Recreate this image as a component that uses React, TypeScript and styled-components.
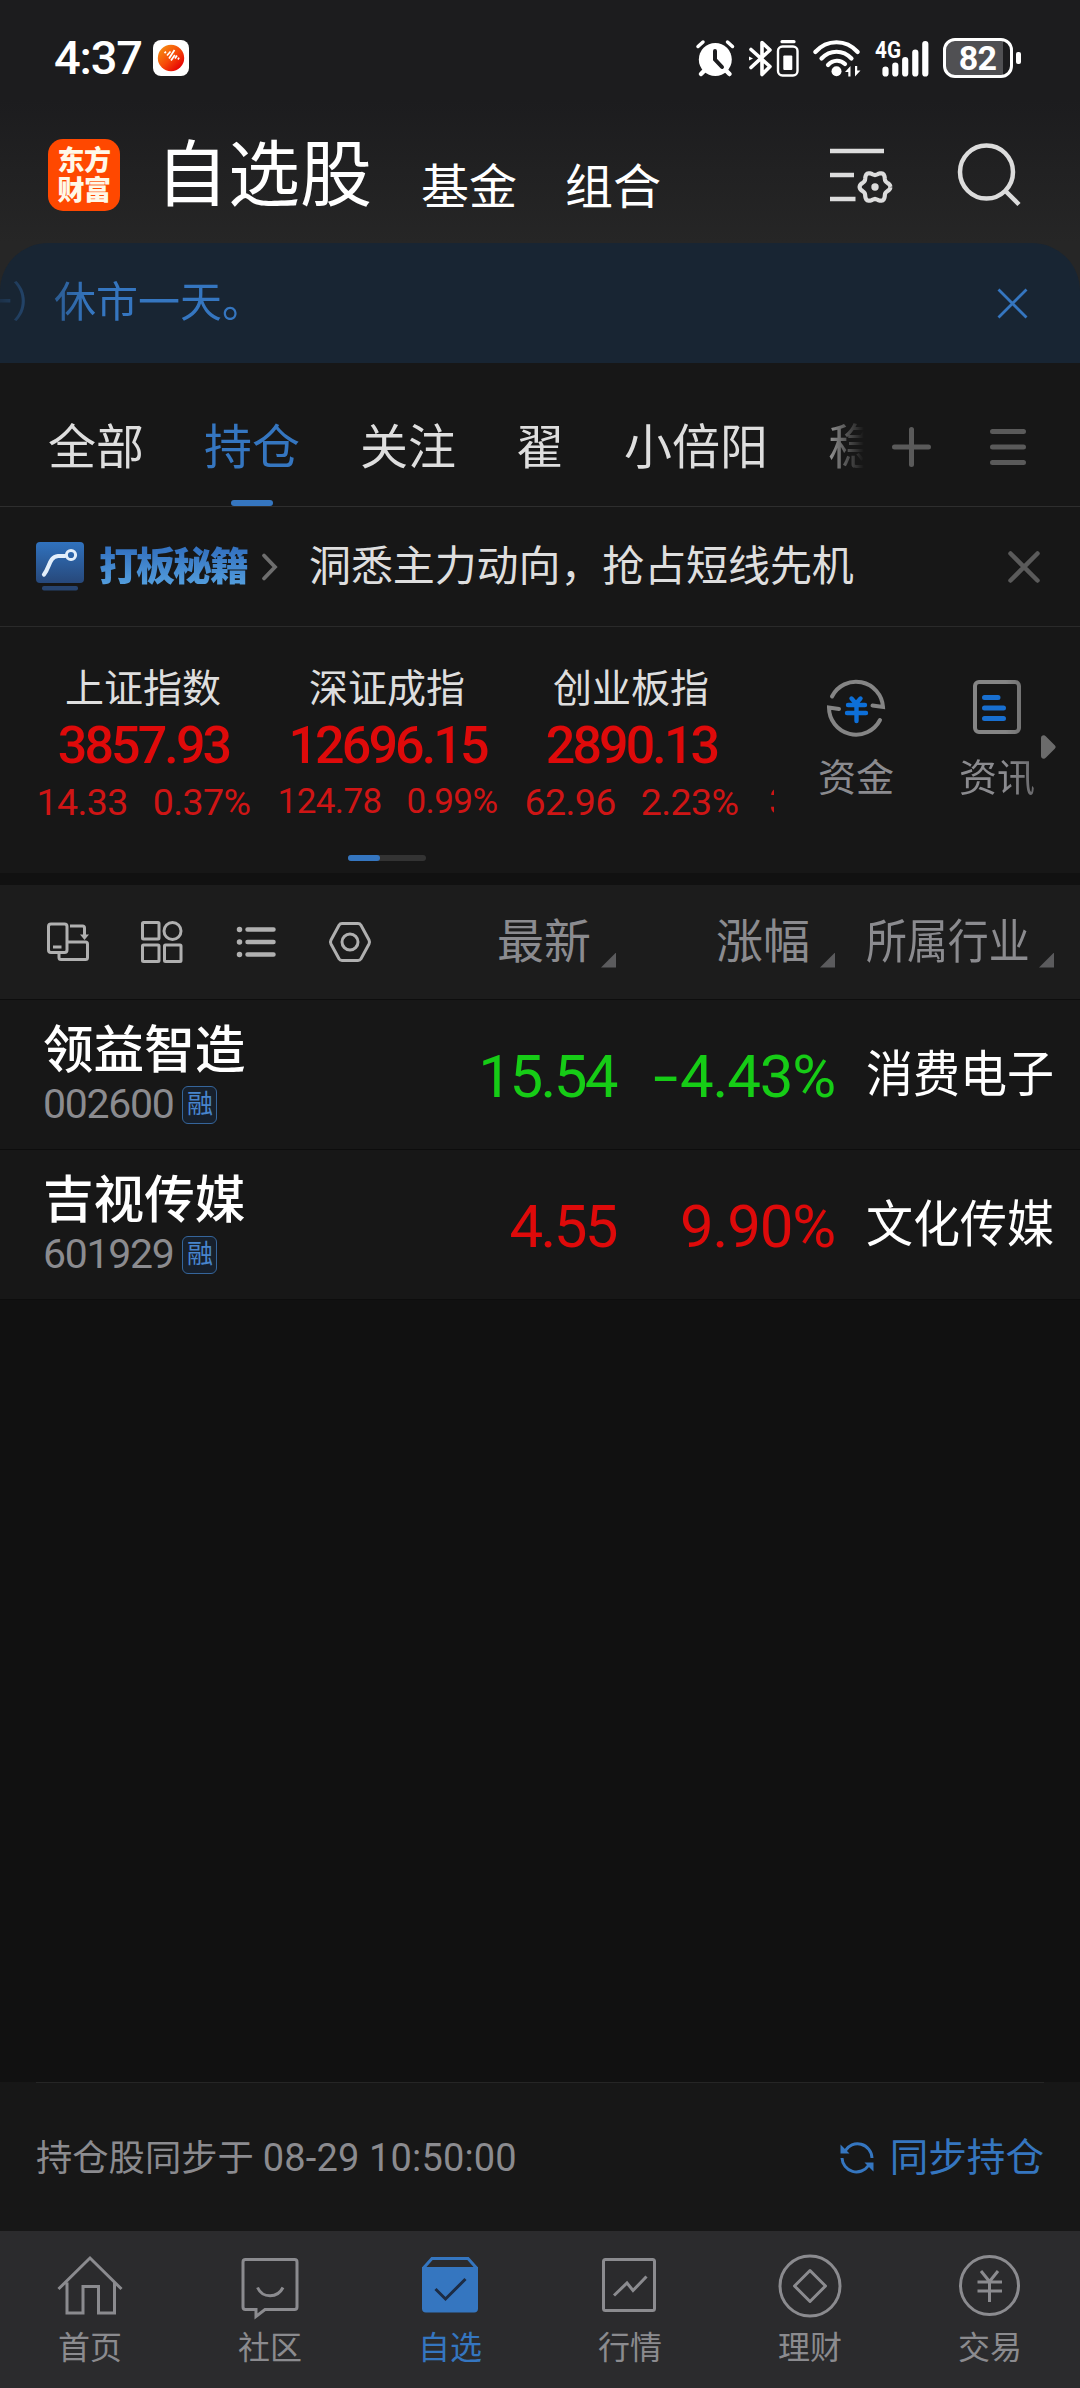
import React from 'react';
import styled, { createGlobalStyle } from 'styled-components';

const BLUE = '#3576c0';
const RED = '#de0a0a';
const GREEN = '#16cc16';
const GREY = '#8b8b8f';

const GlobalStyle = createGlobalStyle`
  * { box-sizing: border-box; }
  body {
    margin: 0;
    background: #111111;
    font-family: Roboto, "Noto Sans CJK SC", sans-serif;
    color: #dedede;
  }
  svg { display: block; flex: none; overflow: visible; }
`;

const Screen = styled.div`
  width: 1080px;
  height: 2388px;
  display: flex;
  flex-direction: column;
  overflow: hidden;
  background: #111111;
  white-space: nowrap;
`;

/* ---------- status bar and header ---------- */

const Top = styled.div`
  height: 363px;
  flex: none;
  display: flex;
  flex-direction: column;
  background: linear-gradient(#1c1c1e 100px, #262626 243px);
`;

const StatusBar = styled.div`
  height: 116px;
  padding: 0 59px 0 54px;
  display: flex;
  align-items: center;
  color: #fff;
`;

const Clock = styled.span`
  font-size: 47px;
  font-weight: 500;
  line-height: 56px;
  letter-spacing: -1.2px;
  width: 99px;
`;

const StatusIcons = styled.div`
  margin-left: auto;
  display: flex;
  align-items: center;
`;

const Gap = styled.span<{ $w: number }>`
  flex: none;
  width: ${(p) => p.$w}px;
`;

const Battery = styled.div`
  width: 70px;
  height: 40px;
  border: 3px solid #fff;
  border-radius: 12px;
  background: linear-gradient(90deg, #505053 57px, #1c1c1e 57px);
  font-size: 34px;
  font-weight: 700;
  line-height: 35px;
  text-align: center;
  letter-spacing: -0.8px;
  padding-right: 1px;
`;

const BatteryTip = styled.span`
  width: 5px;
  height: 12px;
  margin-left: 3px;
  border-radius: 2px;
  background: #fff;
`;

const Header = styled.div`
  height: 127px;
  padding: 0 59px 0 48px;
  display: flex;
  align-items: flex-start;
`;

const Logo = styled.div`
  width: 72px;
  height: 72px;
  margin: 23px 36px 0 0;
  padding-top: 7px;
  border-radius: 15px;
  background: #ff4800;
  color: #fff8e8;
  font-size: 27px;
  font-weight: 900;
  line-height: 30px;
  letter-spacing: -0.5px;
  text-align: center;
`;

const Title = styled.span`
  margin: 24px 49px 0 0;
  font-size: 72px;
  line-height: 72px;
  font-weight: 400;
  color: #fff;
  width: 216px;
`;

const HeaderLink = styled.span`
  margin: 48px 48px 0 0;
  font-size: 48px;
  line-height: 48px;
  color: #fff;
`;

const HeaderIcons = styled.div`
  margin: 27px 0 0 auto;
  display: flex;
  gap: 65px;
`;

const Notice = styled.div`
  height: 120px;
  padding-right: 52px;
  display: flex;
  align-items: center;
  justify-content: space-between;
  background: #182533;
  border-radius: 48px 48px 0 0;
  color: ${BLUE};
`;

const NoticeText = styled.div`
  width: 900px;
  overflow: hidden;
  font-size: 42px;
  line-height: 60px;
  text-indent: -30px;
  mask-image: linear-gradient(90deg, rgba(0, 0, 0, 0.15), #000 90px);
`;

/* ---------- group tabs ---------- */

const Tabs = styled.div`
  height: 144px;
  flex: none;
  padding: 0 54px 0 48px;
  display: flex;
  background: #171717;
  border-bottom: 1px solid #2e2e2e;
`;

const TabList = styled.div`
  width: 816px;
  flex: none;
  display: flex;
  gap: 60px;
  overflow: hidden;
  mask-image: linear-gradient(90deg, #000 760px, transparent 816px);
`;

const Tab = styled.div<{ $active?: boolean }>`
  flex: none;
  height: 143px;
  display: flex;
  flex-direction: column;
  align-items: center;
  font-size: 48px;
  line-height: 64px;
  padding-top: 53px;
  color: ${(p) => (p.$active ? BLUE : '#dedede')};

  &::after {
    content: '';
    width: 42px;
    height: 6px;
    margin-top: auto;
    border-radius: 3px;
    background: ${(p) => (p.$active ? BLUE : 'transparent')};
  }
`;

const TabActions = styled.div`
  flex: 1;
  display: flex;
  justify-content: space-between;
  padding: 64px 0 0 28px;
  color: #5a5a5a;
`;

/* ---------- promotion row ---------- */

const Promo = styled.div`
  height: 120px;
  flex: none;
  padding: 0 41px 0 36px;
  display: flex;
  align-items: center;
  background: #171717;
  border-bottom: 1px solid #2a2a2a;
`;

const PromoName = styled.span`
  width: 151px;
  margin: 0 12px 0 14px;
  font-size: 39px;
  font-weight: 900;
  line-height: 56px;
  letter-spacing: -2px;
  background: linear-gradient(#3574c2 12px, #55a0de 48px);
  background-clip: text;
  -webkit-background-clip: text;
  color: transparent;
`;

const PromoText = styled.span`
  margin-left: 31px;
  font-size: 42px;
  line-height: 60px;
  letter-spacing: -0.1px;
`;

const Pusher = styled.span`
  flex: 1;
`;

const PromoClose = styled.span`
  color: #5a5a5a;
`;

/* ---------- indices ---------- */

const Market = styled.div`
  height: 246px;
  flex: none;
  display: flex;
  background: #171717;
`;

const IndexPane = styled.div`
  width: 774px;
  flex: none;
  padding-left: 21px;
  overflow: hidden;
`;

const IndexList = styled.div`
  display: flex;
  height: 228px;
`;

const IndexCard = styled.div`
  flex: none;
  width: 244px;
  padding-top: 39px;
  display: flex;
  flex-direction: column;
  align-items: center;
`;

const IndexName = styled.div`
  height: 45px;
  font-size: 39px;
  line-height: 46px;
`;

const IndexValue = styled.div`
  height: 68px;
  font-size: 52px;
  font-weight: 500;
  line-height: 69px;
  letter-spacing: -2.9px;
  padding-left: 1px;
  color: ${RED};
`;

const IndexChange = styled.div<{ $size: number }>`
  display: flex;
  gap: 25px;
  font-size: ${(p) => p.$size}px;
  line-height: 46px;
  letter-spacing: -0.6px;
  padding-left: 1px;
  color: #cf1515;
`;

const NextChange = styled.div`
  padding: 153px 0 0 16px;
  font-size: 37px;
  line-height: 44px;
  color: #cf1515;
`;

const Progress = styled.div`
  width: 78px;
  height: 6px;
  margin-left: 327px;
  border-radius: 3px;
  background: #333;

  &::before {
    content: '';
    display: block;
    width: 32px;
    height: 6px;
    border-radius: 3px;
    background: ${BLUE};
  }
`;

const Shortcuts = styled.div`
  flex: 1;
  padding: 50px 0 0 37px;
  display: flex;
  align-items: flex-start;
`;

const Shortcut = styled.div<{ $fade?: boolean }>`
  flex: none;
  width: 90px;
  margin-right: 51px;
  display: flex;
  flex-direction: column;
  align-items: center;
  gap: 16px;
  font-size: 38px;
  line-height: 50px;
  color: ${GREY};
  ${(p) => p.$fade && 'margin-right: -1px; mask-image: linear-gradient(90deg, #000 60%, rgba(0,0,0,.7) 92%);'}
`;

const ShortcutArrow = styled.div`
  padding-top: 58px;
`;

/* ---------- stock table ---------- */

const TableRow = styled.div<{ $head?: boolean }>`
  height: ${(p) => (p.$head ? 115 : 150)}px;
  flex: none;
  padding: 0 26px 0 43px;
  display: grid;
  grid-template-columns: 1fr 219px 219px 219px;
  align-items: center;
  background: ${(p) => (p.$head ? '#1c1c1c' : '#171717')};
  border-bottom: 1px solid #0d0d0d;
`;

const Divider = styled.div`
  height: 12px;
  flex: none;
  background: #111111;
`;

const Tools = styled.div`
  display: flex;
  align-items: center;
  padding-left: 4px;
  gap: 52px;
`;

const HeadCell = styled.div<{ $narrow?: boolean }>`
  display: flex;
  align-items: center;
  justify-content: flex-end;
  font-size: 47px;
  line-height: 60px;
  color: ${GREY};

  span {
    width: ${(p) => (p.$narrow ? 164 : 95)}px;
    transform: ${(p) => (p.$narrow ? 'scaleX(.87)' : 'none')};
    transform-origin: 0 50%;
  }

  &::after {
    content: '';
    width: 15px;
    height: 15px;
    margin: 36px 0 0 9px;
    background: #5b5b5d;
    clip-path: polygon(100% 0, 100% 100%, 0 100%);
  }
`;

const Name = styled.div`
  padding-top: 3px;
  font-size: 50.6px;
  line-height: 56px;
  font-weight: 500;
  color: #fff;
`;

const CodeLine = styled.div`
  display: flex;
  align-items: center;
  height: 50px;
  font-size: 41px;
  line-height: 50px;
  letter-spacing: -1.3px;
  color: ${GREY};
`;

const Badge = styled.span`
  width: 35px;
  height: 38px;
  margin: 1px 0 0 9px;
  border: 1.5px solid #35659b;
  border-radius: 6px;
  background: #17202c;
  color: #4885cc;
  font-size: 26px;
  line-height: 35px;
  letter-spacing: 0;
  text-align: center;
`;

const Figure = styled.div<{ $up: boolean; $spacing: number }>`
  text-align: right;
  font-size: 60px;
  line-height: 70px;
  padding-top: 4px;
  letter-spacing: ${(p) => p.$spacing}px;
  color: ${(p) => (p.$up ? RED : GREEN)};
`;

const Minus = styled.span`
  display: inline-block;
  margin-right: 4px;
  transform: scaleX(1.5);
  transform-origin: 100% 50%;
`;

const Industry = styled.div`
  padding-left: 31px;
  font-size: 50px;
  line-height: 60px;
  color: #fff;

  span {
    display: block;
    width: 200px;
    transform: scaleX(0.94);
    transform-origin: 0 50%;
  }
`;

/* ---------- sync line and navigation ---------- */

const Blank = styled.div`
  flex: 1;
`;

const SyncBar = styled.div`
  height: 149px;
  flex: none;
  padding: 0 36px;
  background: #171717;
`;

const SyncInner = styled.div`
  height: 149px;
  padding-top: 2px;
  border-top: 1px solid #262626;
  display: flex;
  align-items: center;
  justify-content: space-between;
`;

const SyncInfo = styled.span`
  font-size: 36.3px;
  line-height: 50px;
  color: ${GREY};
`;

const SyncTime = styled.span`
  font-size: 38px;
  letter-spacing: 0.15px;
`;

const SyncButton = styled.div`
  display: flex;
  align-items: center;
  gap: 16px;
  font-size: 38.6px;
  line-height: 50px;
  color: ${BLUE};
`;

const Nav = styled.div`
  height: 157px;
  flex: none;
  display: grid;
  grid-template-columns: repeat(6, 180px);
  background: #2b2b2d;
`;

const NavItem = styled.div<{ $active?: boolean }>`
  padding-top: 22px;
  display: flex;
  flex-direction: column;
  align-items: center;
  gap: 9px;
  font-size: 32px;
  line-height: 44px;
  color: ${(p) => (p.$active ? BLUE : GREY)};
`;

/* ---------- drawings ---------- */

const wave = Array.from({ length: 73 }, (_, i) => {
  const a = (i * 5 * Math.PI) / 180;
  const r = 13.7 + 1.7 * Math.cos(6 * a);
  return `${i ? 'L' : 'M'}${(45 + r * Math.cos(a)).toFixed(2)} ${(38 + r * Math.sin(a)).toFixed(2)}`;
}).join('');

const Cross = ({ size, w, round }: { size: number; w: number; round?: boolean }) => (
  <svg width={size} height={size} viewBox={`0 0 ${size} ${size}`} fill="none" stroke="currentColor" strokeWidth={w} strokeLinecap={round ? 'round' : 'butt'}>
    <path d={`M1.5 1.5 ${size - 1.5} ${size - 1.5}M${size - 1.5} 1.5 1.5 ${size - 1.5}`} />
  </svg>
);

const MiniApp = () => (
  <svg width="36" height="36" viewBox="0 0 36 36">
    <defs>
      <linearGradient id="sun" x1="0" y1="0" x2="1" y2="1">
        <stop offset="0.1" stopColor="#f58a12" />
        <stop offset="0.5" stopColor="#f64a08" />
        <stop offset="0.85" stopColor="#e60505" />
      </linearGradient>
    </defs>
    <rect width="36" height="36" rx="8" fill="#fff" />
    <circle cx="18" cy="18" r="13.2" fill="url(#sun)" />
    <path d="M11.5 13.2l1.5-1.5M14 15.5l3.5-4M16 18.5l5.5-8.5M18 20.5l3.8-5.5M22 18.5l2-3M25 19.5l1-1.8" stroke="#fff" strokeWidth="1.7" fill="none" />
  </svg>
);

const Alarm = () => (
  <svg width="39" height="37" viewBox="0 0 39 37" fill="none" stroke="#fff" strokeLinecap="round">
    <circle cx="19.3" cy="19.5" r="16.5" fill="#fff" stroke="none" />
    <path d="M2 6.5 7 2M36.5 6.5 31.5 2" strokeWidth="3.5" />
    <path d="M8 31l-3 3M30.5 31l3 3" strokeWidth="4.5" />
    <path d="M19 11v8.5l7 7.5" stroke="#1c1c1e" strokeWidth="4" />
  </svg>
);

const Bluetooth = () => (
  <svg width="51" height="37" viewBox="0 0 51 37" fill="none" stroke="#fff">
    <path d="M2 9.5 21 26.5 13 34.5V2.5L21 10 2 27.5" strokeWidth="3.6" strokeLinejoin="round" strokeLinecap="round" />
    <path d="M0 16.5l4 2-4 2z" fill="#fff" stroke="none" />
    <rect x="29" y="6.5" width="19.5" height="29" rx="4.5" strokeWidth="2.4" />
    <path d="M33 1.7h12" strokeWidth="3.2" strokeLinecap="round" />
    <rect x="34.3" y="15.5" width="9" height="14.5" rx="1" fill="#fff" stroke="none" />
  </svg>
);

const Wifi = () => (
  <svg width="47" height="37" viewBox="0 0 47 37" fill="none" stroke="#fff" strokeLinecap="round" strokeWidth="4.2">
    <path d="M2.3 12C14-1 33-1 44.7 12" />
    <path d="M8.5 18.5C17 9.5 30 9.5 38.5 18.5" />
    <path d="M15 25C20 19.5 27.5 19.5 32 24" />
    <circle cx="23.5" cy="31.2" r="5" fill="#fff" stroke="none" />
    <path d="M32 32l5.5-6v10.500h-2.200V32zM47.500 30.500l-5.500 6V26h2.200v4.500z" fill="#fff" stroke="none" />
  </svg>
);

const Signal = () => (
  <svg width="54" height="37" viewBox="0 0 54 37" stroke="#fff" strokeWidth="6.2" strokeLinecap="round">
    <path d="M10.5 29.5v4M20.3 25.5v8M30.2 20v13.5M40.3 12.500v21M50.3 4v29.5" />
    <text x="0" y="18" stroke="none" fill="#fff" fontSize="24" fontWeight="700" fontFamily="Roboto, sans-serif" textLength="26" lengthAdjust="spacingAndGlyphs">4G</text>
  </svg>
);

const MenuGear = () => (
  <svg width="63" height="58" viewBox="0 0 63 58" fill="none" stroke="#dcdcdc" strokeWidth="4.5">
    <path d="M0 8h54M0 32h24M0 56h25.5" />
    <path d={wave} strokeWidth="4.2" transform="translate(0 6)" />
    <circle cx="45" cy="44" r="3.7" fill="#dcdcdc" stroke="none" />
  </svg>
);

const Search = () => (
  <svg width="63" height="63" viewBox="0 0 63 63" fill="none" stroke="#dcdcdc" strokeWidth="4.5">
    <circle cx="28.5" cy="29" r="26.5" />
    <path d="M47.500 48 61 61.500" />
  </svg>
);

const Plus = () => (
  <svg width="39" height="40" viewBox="0 0 39 40" stroke="currentColor" strokeWidth="5" strokeLinecap="round">
    <path d="M19.500 2.500v35M2.500 20h34" />
  </svg>
);

const Bars = () => (
  <svg width="36" height="40" viewBox="0 0 36 40" stroke="currentColor" strokeWidth="5" strokeLinecap="round">
    <path d="M2.500 4.500h31M2.500 20h31M2.500 35.500h31" />
  </svg>
);

const PromoIcon = () => (
  <svg width="49" height="50" viewBox="0 0 49 50" fill="none">
    <defs>
      <linearGradient id="tile" x1="0" y1="0" x2="0" y2="1">
        <stop offset="0" stopColor="#3072be" />
        <stop offset="1" stopColor="#27487a" />
      </linearGradient>
    </defs>
    <rect width="48" height="41" rx="4" fill="url(#tile)" />
    <rect x="6" y="44" width="36" height="4.5" rx="2" fill="#27446f" />
    <path d="M8 32.500C14 25 13 15 22 14H29" stroke="#e3effb" strokeWidth="4.2" strokeLinecap="round" />
    <circle cx="35" cy="13" r="4.6" stroke="#e3effb" strokeWidth="3" />
  </svg>
);

const Chevron = () => (
  <svg width="16" height="28" viewBox="0 0 16 28" fill="none" stroke="#6e6e6e" strokeWidth="3.8" strokeLinecap="round">
    <path d="M2 2.500 13 14 2 25.500" />
  </svg>
);

const FundIcon = () => (
  <svg width="60" height="60" viewBox="0 0 60 60" fill="none" stroke="#858585" strokeWidth="4">
    <path d="M6 19.500A27 27 0 0 1 57 30L46.500 28.500" strokeLinecap="round" />
    <path d="M54 43A27 27 0 0 1 3 30.500L13 32" strokeLinecap="round" />
    <path d="M25.500 21.500 30 26.500 34.500 21.500M22 28h17M21 36h19M30.500 26v18" stroke="#0d6fd8" strokeWidth="4.4" strokeLinecap="round" />
  </svg>
);

const NewsIcon = () => (
  <svg width="48" height="60" viewBox="0 0 48 60" fill="none" stroke="#858585" strokeWidth="4">
    <rect x="2" y="5" width="44" height="50" rx="4" />
    <path d="M11.500 20.500h13.500M11.500 31h19M11.500 41.500h19" stroke="#186fd0" strokeWidth="5" strokeLinecap="round" />
  </svg>
);

const ToolIcon = ({ children }: { children: React.ReactNode }) => (
  <svg width="42" height="42" viewBox="0 0 42 42" fill="none" stroke="#b0b0b0" strokeWidth="3" strokeLinejoin="round">
    {children}
  </svg>
);

const SyncIcon = () => (
  <svg width="34" height="34" viewBox="0 0 34 34" fill="none" stroke={BLUE} strokeWidth="3">
    <path d="M5 10A14.500 14.500 0 0 1 32 17M2 17A14.500 14.500 0 0 0 28.500 24.500" />
    <path d="M.5 3.500V12.500H9.500zM33.500 30.500V21.500H24.500z" fill={BLUE} stroke="none" />
  </svg>
);

const NavSvg = ({ children }: { children: React.ReactNode }) => (
  <svg width="66" height="64" viewBox="0 0 66 64" fill="none" stroke="currentColor" strokeWidth="3">
    {children}
  </svg>
);

const navItems = [
  {
    label: '首页',
    icon: <path d="M1.500 36 33 5 64.500 36M10 29.500V60H26V33.500H41.500V60H57.500V29.500" />,
  },
  {
    label: '社区',
    icon: (
      <>
        <path d="M8.500 6.500h49a2.500 2.500 0 0 1 2.500 2.500v45a2.500 2.500 0 0 1-2.500 2.500H28L19 63.500V56.500H8.500A2.500 2.500 0 0 1 6 54V9a2.500 2.500 0 0 1 2.500-2.500" />
        <path d="M20.500 34.500c5 11 20 11 25.500 0" />
      </>
    ),
  },
  {
    label: '自选',
    active: true,
    icon: (
      <>
        <path d="M5 14h56v41.500a4 4 0 0 1-4 4H9a4 4 0 0 1-4-4z" fill="currentColor" stroke="none" />
        <path d="M6.500 15 15 5.500H51L59.500 15" />
        <path d="M18.500 36 28.500 46 48.500 26" stroke="#1d2c44" />
      </>
    ),
  },
  {
    label: '行情',
    icon: (
      <>
        <rect x="6.500" y="6.500" width="51" height="51" rx="2" />
        <path d="M17 42.500 30 30 36 37.500 49.500 23.500" />
      </>
    ),
  },
  {
    label: '理财',
    icon: (
      <>
        <circle cx="33" cy="33" r="30" />
        <path d="M33 17.500 48.500 33 33 48.500 17.500 33z" strokeLinejoin="round" />
      </>
    ),
  },
  {
    label: '交易',
    icon: (
      <>
        <circle cx="32.500" cy="32.500" r="29" />
        <path d="M24 18 32.500 28.500 41 18M20.500 29h24.500M20.500 38h24.500M32.500 28v21" />
      </>
    ),
  },
];

const indices = [
  { name: '上证指数', value: '3857.93', diff: '14.33', pct: '0.37%', size: 37.5 },
  { name: '深证成指', value: '12696.15', diff: '124.78', pct: '0.99%', size: 35 },
  { name: '创业板指', value: '2890.13', diff: '62.96', pct: '2.23%', size: 37.5 },
];

const stocks = [
  { name: '领益智造', code: '002600', price: '15.54', pct: '4.43%', up: false, industry: '消费电子' },
  { name: '吉视传媒', code: '601929', price: '4.55', pct: '9.90%', up: true, industry: '文化传媒' },
];

export default function App() {
  return (
    <Screen>
      <GlobalStyle />
      <Top>
        <StatusBar>
          <Clock>4:37</Clock>
          <MiniApp />
          <StatusIcons>
            <Alarm />
            <Gap $w={14} />
            <Bluetooth />
            <Gap $w={13} />
            <Wifi />
            <Gap $w={15} />
            <Signal />
            <Gap $w={14} />
            <Battery>82</Battery>
            <BatteryTip />
          </StatusIcons>
        </StatusBar>
        <Header>
          <Logo>
            东方
            <br />
            财富
          </Logo>
          <Title>自选股</Title>
          <HeaderLink>基金</HeaderLink>
          <HeaderLink>组合</HeaderLink>
          <HeaderIcons>
            <MenuGear />
            <Search />
          </HeaderIcons>
        </Header>
        <Notice>
          <NoticeText>一）休市一天。</NoticeText>
          <Cross size={31} w={2.8} />
        </Notice>
      </Top>

      <Tabs>
        <TabList>
          <Tab>全部</Tab>
          <Tab $active>持仓</Tab>
          <Tab>关注</Tab>
          <Tab>翟</Tab>
          <Tab>小倍阳</Tab>
          <Tab>稳</Tab>
        </TabList>
        <TabActions>
          <Plus />
          <Bars />
        </TabActions>
      </Tabs>

      <Promo>
        <PromoIcon />
        <PromoName>打板秘籍</PromoName>
        <Chevron />
        <PromoText>洞悉主力动向，抢占短线先机</PromoText>
        <Pusher />
        <PromoClose>
          <Cross size={30} w={4.5} round />
        </PromoClose>
      </Promo>

      <Market>
        <IndexPane>
          <IndexList>
            {indices.map((i) => (
              <IndexCard key={i.name}>
                <IndexName>{i.name}</IndexName>
                <IndexValue>{i.value}</IndexValue>
                <IndexChange $size={i.size}>
                  <span>{i.diff}</span>
                  <span>{i.pct}</span>
                </IndexChange>
              </IndexCard>
            ))}
            <NextChange>3</NextChange>
          </IndexList>
          <Progress />
        </IndexPane>
        <Shortcuts>
          <Shortcut>
            <FundIcon />
            资金
          </Shortcut>
          <Shortcut $fade>
            <NewsIcon />
            资讯
          </Shortcut>
          <ShortcutArrow>
            <svg width="15" height="24" viewBox="0 0 15 24" fill="#6b6b6b">
              <path d="M0 3C0 .5 3-.8 5 1.500L14 10.500Q15.500 12 14 13.500L5 22.500C3 24.800 0 23.500 0 21z" />
            </svg>
          </ShortcutArrow>
        </Shortcuts>
      </Market>

      <Divider />

      <TableRow $head>
        <Tools>
          <ToolIcon>
            <rect x="1.500" y="3" width="18.500" height="28.500" rx="2.500" />
            <path d="M6 26h8.500M23 5h12.500a2 2 0 0 1 2 2v8M20 21H38.500a2 2 0 0 1 2 2V36.500a2 2 0 0 1-2 2H14a2 2 0 0 1-2-2V32" />
            <path d="M33 13.500h9L37.500 19z" fill="#b0b0b0" stroke="none" />
          </ToolIcon>
          <ToolIcon>
            <rect x="1.500" y="1.500" width="16.500" height="16.500" rx="1" />
            <circle cx="31.500" cy="10" r="8.500" />
            <rect x="1.500" y="24" width="16.500" height="16.500" rx="1" />
            <rect x="23.500" y="24" width="16.500" height="16.500" rx="1" />
          </ToolIcon>
          <ToolIcon>
            <path d="M4.500 8.500h0M4.500 21h0M4.500 33.500h0" strokeWidth="5.500" strokeLinecap="round" />
            <path d="M12.500 8.500h26M12.500 21h26M12.500 33.500h26" strokeWidth="4.500" strokeLinecap="round" />
          </ToolIcon>
          <ToolIcon>
            <path d="M13 2.500H29Q31 2.500 32 4.200L40 19Q41 21 40 23L32 37.800Q31 39.500 29 39.500H13Q11 39.500 10 37.800L2 23Q1 21 2 19L10 4.200Q11 2.500 13 2.500z" />
            <circle cx="21" cy="21" r="8" />
          </ToolIcon>
        </Tools>
        <HeadCell>
          <span>最新</span>
        </HeadCell>
        <HeadCell>
          <span>涨幅</span>
        </HeadCell>
        <HeadCell $narrow>
          <span>所属行业</span>
        </HeadCell>
      </TableRow>

      {stocks.map((s) => (
        <TableRow key={s.code}>
          <div>
            <Name>{s.name}</Name>
            <CodeLine>
              {s.code}
              <Badge>融</Badge>
            </CodeLine>
          </div>
          <Figure $up={s.up} $spacing={-2.6}>
            {s.price}
          </Figure>
          <Figure $up={s.up} $spacing={-1.2}>
            {!s.up && <Minus>-</Minus>}
            {s.pct}
          </Figure>
          <Industry>
            <span>{s.industry}</span>
          </Industry>
        </TableRow>
      ))}

      <Blank />

      <SyncBar>
        <SyncInner>
          <SyncInfo>
            持仓股同步于 <SyncTime>08-29 10:50:00</SyncTime>
          </SyncInfo>
          <SyncButton>
            <SyncIcon />
            同步持仓
          </SyncButton>
        </SyncInner>
      </SyncBar>

      <Nav>
        {navItems.map((n) => (
          <NavItem key={n.label} $active={n.active}>
            <NavSvg>{n.icon}</NavSvg>
            {n.label}
          </NavItem>
        ))}
      </Nav>
    </Screen>
  );
}
